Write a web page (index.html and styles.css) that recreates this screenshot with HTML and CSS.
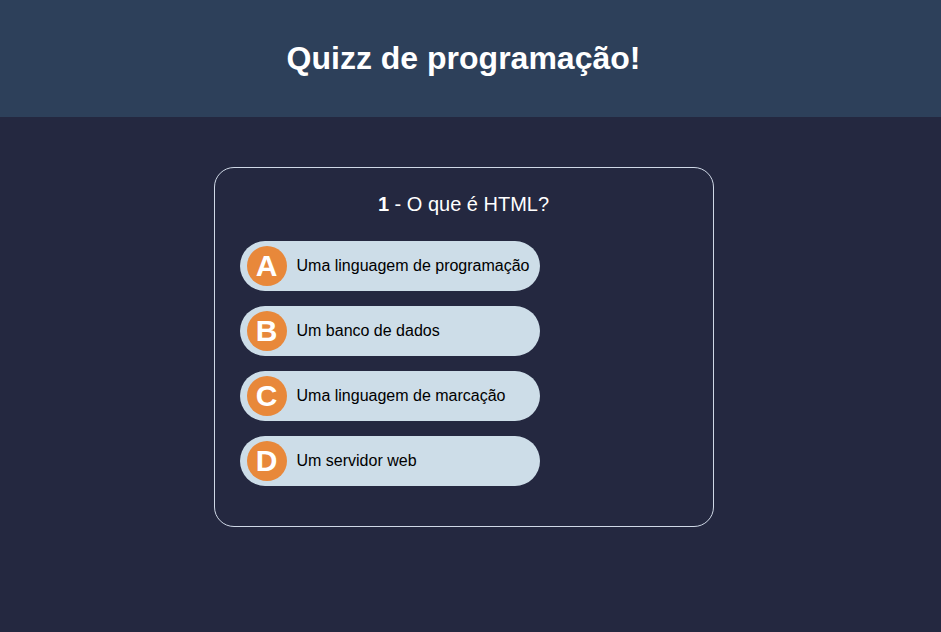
FILE: index.html
```html
<!DOCTYPE html>
<html lang="pt-BR">
<head>
<meta charset="utf-8">
<title>Quizz de programação!</title>
<link rel="stylesheet" href="styles.css">
</head>
<body>
<header class="topbar">
  <h1 class="title">Quizz de programação!</h1>
</header>
<main class="content">
  <section class="card">
    <h2 class="question"><strong>1</strong> - O que é HTML?</h2>
    <div class="options">
      <button class="option"><span class="letter">A</span><span class="label">Uma linguagem de programação</span></button>
      <button class="option"><span class="letter">B</span><span class="label">Um banco de dados</span></button>
      <button class="option"><span class="letter">C</span><span class="label">Uma linguagem de marcação</span></button>
      <button class="option"><span class="letter">D</span><span class="label">Um servidor web</span></button>
    </div>
  </section>
</main>
</body>
</html>
```
FILE: styles.css
```css
* { box-sizing: border-box; }
html, body { margin: 0; padding: 0; }
body {
  background: #242840;
  font-family: "Liberation Sans", Arial, sans-serif;
  color: #fff;
  min-height: 632px;
}
.topbar {
  background: #2d405a;
  height: 117px;
  display: flex;
  align-items: center;
  justify-content: center;
  padding-right: 14px;
}
.title {
  margin: 0;
  font-size: 32px;
  font-weight: bold;
  color: #fff;
}
.content {
  display: flex;
  justify-content: center;
  padding-top: 50px;
  padding-right: 14px;
}
.card {
  width: 500px;
  border: 1px solid #cfd8e6;
  border-radius: 20px;
  padding: 25px 25px 40px;
}
.question {
  margin: 0 0 25px;
  text-align: center;
  font-size: 20px;
  font-weight: normal;
  line-height: 23px;
}
.question strong { font-weight: bold; }
.options {
  display: flex;
  flex-direction: column;
  gap: 15px;
}
.option {
  width: 300px;
  height: 50px;
  border: none;
  border-radius: 25px;
  background: #cddde8;
  display: flex;
  align-items: center;
  padding: 0 7px;
  font-family: inherit;
  cursor: pointer;
}
.letter {
  width: 40px;
  height: 40px;
  border-radius: 50%;
  background: #e8883a;
  color: #fff;
  font-weight: bold;
  font-size: 30px;
  display: flex;
  align-items: center;
  justify-content: center;
  flex-shrink: 0;
}
.label {
  margin-left: 10px;
  font-size: 16px;
  color: #000;
  white-space: nowrap;
}
```
